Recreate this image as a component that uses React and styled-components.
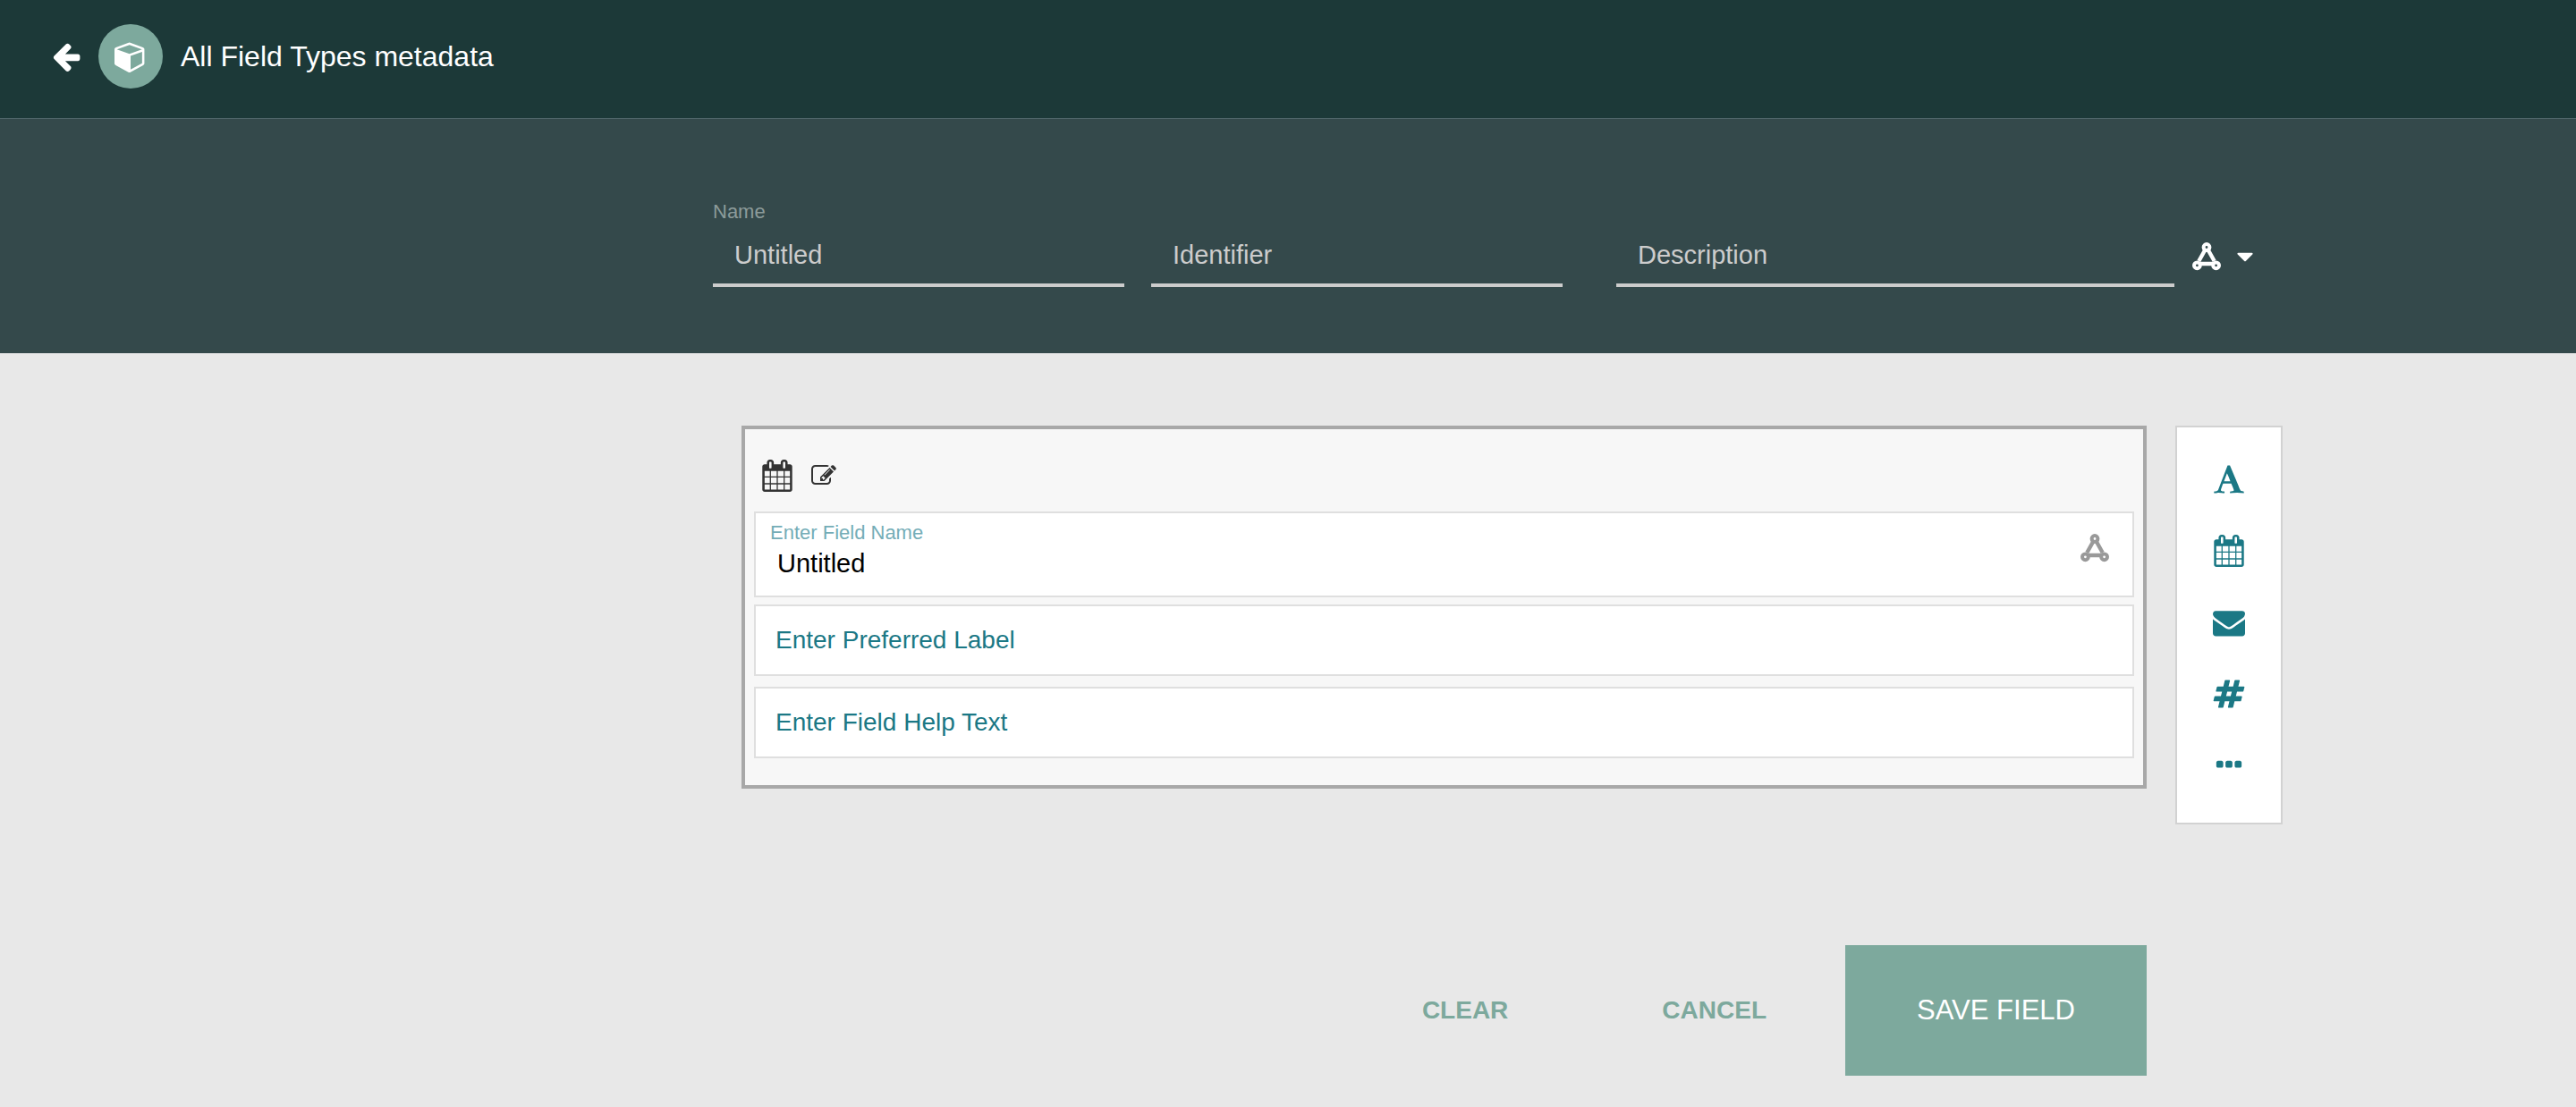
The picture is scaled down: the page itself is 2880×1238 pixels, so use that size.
import React from "react";
import styled, { createGlobalStyle } from "styled-components";

const GlobalStyle = createGlobalStyle`
  *, *::before, *::after { box-sizing: border-box; }
  body {
    margin: 0;
    background: #e8e8e8;
    font-family: "Liberation Sans", Arial, Helvetica, sans-serif;
    font-size: 28px;
    line-height: 32px;
  }
  button, input { font: inherit; }
  button { padding: 0; border: 0; background: none; cursor: pointer; }
`;

/* ---------- icons ---------- */

const Glyph = styled.svg`
  display: block;
  flex: none;
  width: ${(p) => p.$size}px;
  height: ${(p) => p.$size}px;
  fill: currentColor;
`;

const paths = {
  back: "M1664 896v128q0 53-32.5 90.5t-84.5 37.5h-704l293 294q38 36 38 90t-38 90l-75 76q-37 37-90 37-52 0-91-37l-651-652q-37-37-37-90 0-52 37-91l651-650q38-38 91-38 52 0 90 38l75 74q38 38 38 91t-38 91l-293 293h704q52 0 84.5 37.5t32.5 90.5z",
  cube: "M896 1629l640-349v-636l-640 233v752zm-64-865l698-254-698-254-698 254zm832-252v768q0 35-18 65t-49 47l-704 384q-28 16-61 16t-61-16l-704-384q-31-17-49-47t-18-65v-768q0-40 23-73t61-47l704-256q22-8 44-8t44 8l704 256q38 14 61 47t23 73z",
  caret: "M1408 704q0 26-19 45l-448 448q-19 19-45 19t-45-19l-448-448q-19-19-19-45t19-45 45-19h896q26 0 45 19t19 45z",
  calendar: "M192 1664h288v-288h-288v288zm352 0h320v-288h-320v288zm-352-352h288v-320h-288v320zm352 0h320v-320h-320v320zm-352-384h288v-288h-288v288zm736 736h320v-288h-320v288zm-384-736h320v-288h-320v288zm768 736h288v-288h-288v288zm-384-352h320v-320h-320v320zm-352-864v-288q0-13-9.500-22.500t-22.500-9.500h-64q-13 0-22.500 9.500t-9.500 22.500v288q0 13 9.500 22.500t22.500 9.500h64q13 0 22.500-9.500t9.500-22.500zm736 864h288v-320h-288v320zm-384-384h320v-288h-320v288zm384 0h288v-288h-288v288zm32-480v-288q0-13-9.500-22.500t-22.500-9.500h-64q-13 0-22.500 9.500t-9.500 22.500v288q0 13 9.500 22.500t22.500 9.500h64q13 0 22.500-9.500t9.500-22.500zm384-64v1280q0 52-38 90t-90 38h-1408q-52 0-90-38t-38-90v-1280q0-52 38-90t90-38h128v-96q0-66 47-113t113-47h64q66 0 113 47t47 113v96h384v-96q0-66 47-113t113-47h64q66 0 113 47t47 113v96h128q52 0 90 38t38 90z",
  edit: "M888 1184l116-116-152-152-116 116v56h96v96h56zm440-720q-16-16-33 1l-350 350q-17 17-1 33t33-1l350-350q17-17 1-33zm80 594v190q0 119-84.500 203.500t-203.500 84.500h-832q-119 0-203.500-84.500t-84.500-203.500v-832q0-119 84.500-203.500t203.500-84.500h832q63 0 117 25 15 7 18 23 3 17-9 29l-49 49q-14 14-32 8-23-6-45-6h-832q-66 0-113 47t-47 113v832q0 66 47 113t113 47h832q66 0 113-47t47-113v-126q0-13 9-22l64-64q15-15 35-7t20 29zm-96-738l288 288-672 672h-288v-288zm444 132l-92 92-288-288 92-92q28-28 68-28t68 28l152 152q28 28 28 68t-28 68z",
  text: "M789 559l-170 450q33 0 136.500 2t160.500 2q19 0 57-2-87-253-184-452zm-725 1105l2-79q23-7 56-12.500t57-10.500 49.500-14.500 44.500-29 31-50.500l237-616 280-724h128q8 14 11 21l205 480q33 78 106 257.500t114 274.500q15 34 58 144.500t72 168.500q20 45 35 57 19 15 88 29.500t84 20.500q6 38 6 57 0 5-.5 13.500t-.5 12.500q-63 0-190-8t-191-8q-76 0-215 7t-178 8q0-43 4-78l131-28q1 0 12.500-2.500t15.500-3.500 14.500-4.500 15-6.500 11-8 9-11 2.500-14q0-16-31-96.500t-72-177.500-42-100l-450-2q-26 58-76.500 195.500t-50.500 162.500q0 22 14 37.500t43.500 24.500 48.500 13.500 57 8.500 41 4q1 19 1 58 0 9-2 27-58 0-174.500-10t-174.500-10q-8 0-26.500 4t-21.500 4q-80 14-188 14z",
  email: "M1792 710v794q0 66-47 113t-113 47h-1472q-66 0-113-47t-47-113v-794q44 49 101 87 362 246 497 345 57 42 92.500 65.500t94.500 48 110 24.500h2q51 0 110-24.500t94.500-48 92.500-65.500q170-123 498-345 57-39 100-87zm0-294q0 79-49 151t-122 123q-376 261-468 325-10 7-42.500 31t-54 38.500-52 32.500-57.500 27-50 9h-2q-23 0-50-9t-57.500-27-52-32.500-54-38.500-42.500-31q-91-64-262-182.500t-205-142.500q-62-42-117-115.500t-55-136.500q0-78 41.500-130t118.500-52h1472q65 0 112.500 47t47.500 113z",
  number: "M991 1024l64-256h-254l-64 256h254zm768-504l-56 224q-7 24-31 24h-327l-64 256h311q15 0 25 12 10 14 6 28l-56 224q-5 24-31 24h-327l-81 328q-7 24-31 24h-224q-16 0-26-12-9-12-6-28l78-312h-254l-81 328q-7 24-31 24h-225q-15 0-25-12-9-12-6-28l78-312h-311q-15 0-25-12-9-12-6-28l56-224q7-24 31-24h327l64-256h-311q-15 0-25-12-10-14-6-28l56-224q5-24 31-24h327l81-328q7-24 32-24h224q15 0 25 12 9 12 6 28l-78 312h254l81-328q7-24 32-24h224q15 0 25 12 9 12 6 28l-78 312h311q15 0 25 12 9 12 6 28z",
  more: "M576 736v192q0 40-28 68t-68 28h-192q-40 0-68-28t-28-68v-192q0-40 28-68t68-28h192q40 0 68 28t28 68zm512 0v192q0 40-28 68t-68 28h-192q-40 0-68-28t-28-68v-192q0-40 28-68t68-28h192q40 0 68 28t28 68zm512 0v192q0 40-28 68t-68 28h-192q-40 0-68-28t-28-68v-192q0-40 28-68t68-28h192q40 0 68 28t28 68z",
};

const Icon = ({ name, size = 36 }) => (
  <Glyph viewBox="0 0 1792 1792" $size={size} aria-hidden="true">
    <path d={paths[name]} />
  </Glyph>
);

const OntologyIcon = () => (
  <Glyph viewBox="0 0 32 32" $size={32} aria-hidden="true">
    <g fill="none" stroke="currentColor">
      <path strokeWidth="4.400" d="M14.300 8.500L7.300 21M17.700 8.500L24.700 21M9 24H23" />
      <circle strokeWidth="4" cx="16" cy="5.500" r="3.400" />
      <circle strokeWidth="4" cx="5.400" cy="25.800" r="3.400" />
      <circle strokeWidth="4" cx="26.600" cy="25.800" r="3.400" />
    </g>
  </Glyph>
);

/* ---------- top bar ---------- */

const TopBar = styled.header`
  display: flex;
  align-items: center;
  height: 133px;
  padding: 0 56px 6px;
  border-bottom: 1px solid #50666a;
  background: #1c3938;
  color: #fff;
`;

const BackButton = styled.button`
  margin-right: 18px;
  color: inherit;
`;

const Badge = styled.span`
  display: grid;
  place-items: center;
  width: 72px;
  height: 72px;
  margin-right: 20px;
  border-radius: 50%;
  background: #7da99d;
`;

const Title = styled.h1`
  margin: 0;
  font-size: 32px;
  font-weight: 400;
  line-height: 36px;
`;

/* ---------- shared page columns ---------- */

const Columns = styled.div`
  display: grid;
  grid-template-columns: minmax(0, 797fr) minmax(0, 1755fr) minmax(0, 328fr);
  & > * { grid-column: 2; }
`;

/* ---------- details form ---------- */

const DetailsBand = styled(Columns)`
  padding: 88px 0 74px;
  background: #34494b;
`;

const DetailsRow = styled.div`
  display: flex;
  align-items: flex-end;
`;

const Detail = styled.div`
  display: flex;
  flex: ${(p) => p.$grow} 1 0;
  flex-direction: column;
  min-width: 0;
  margin-right: ${(p) => p.$gap}px;
`;

const DetailLabel = styled.label`
  height: 32px;
  color: #8c9b9a;
  font-size: 22px;
`;

const DetailInput = styled.input`
  width: 100%;
  height: 68px;
  padding: 0 24px;
  border: 0;
  border-bottom: 4px solid #ccc;
  border-radius: 0;
  background: none;
  color: #ccc;
  font-size: 29px;
  &::placeholder { color: #ccc; opacity: 1; }
`;

const DetailActions = styled.div`
  display: flex;
  flex: none;
  gap: 12px;
  width: 121px;
  padding: 0 0 18px 20px;
`;

const WhiteButton = styled.button`
  color: #fff;
`;

/* ---------- field editor ---------- */

const Workspace = styled.main`
  display: flex;
  align-items: flex-start;
  gap: 32px;
  padding: 81px 0 0 32px;
`;

const Card = styled.section`
  flex: 1;
  min-width: 0;
  padding: 32px 10px 30px;
  border: 4px solid #a8a8a8;
  background: #f7f7f7;
`;

const CardHead = styled.div`
  display: flex;
  align-items: center;
  gap: 20px;
  height: 60px;
  padding: 0 8px 20px;
  color: #333;
`;

const Field = styled.div`
  display: flex;
  align-items: center;
  height: ${(p) => (p.$tall ? 96 : 80)}px;
  margin-bottom: ${(p) => (p.$last ? 0 : p.$tall ? 8 : 12)}px;
  padding-right: 26px;
  border: 2px solid #dfdfdf;
  background: #fff;
`;

const FieldBody = styled.div`
  display: flex;
  flex: 1;
  flex-direction: column;
  align-self: flex-start;
  min-width: 0;
  padding-top: 8px;
`;

const FieldLabel = styled.label`
  padding-left: 16px;
  color: #74adb7;
  font-size: 22px;
  line-height: 28px;
`;

const FieldInput = styled.input`
  width: 100%;
  height: 40px;
  padding: 0 22px;
  border: 0;
  background: none;
  color: #1b7885;
  &::placeholder { color: inherit; opacity: 1; }
`;

const NameInput = styled(FieldInput)`
  padding: 0 24px;
  color: #000;
  font-size: 29px;
`;

const GreyButton = styled.button`
  padding-bottom: 14px;
  color: #999;
`;

/* ---------- palette ---------- */

const Palette = styled.nav`
  display: flex;
  flex: none;
  flex-direction: column;
  align-items: center;
  width: 120px;
  padding: 18px 0 24px;
  border: 2px solid #d2d2d2;
  background: #fff;
`;

const PaletteButton = styled.button`
  display: grid;
  place-items: center;
  width: 80px;
  height: 80px;
  color: #1b7885;
`;

/* ---------- footer ---------- */

const Actions = styled.footer`
  display: flex;
  justify-content: flex-end;
  align-items: stretch;
  gap: 4px;
  height: 146px;
  margin: 135px 152px 34px 0;
`;

const TextButton = styled.button`
  padding: 0 84px;
  color: #7da99d;
  font-weight: 700;
`;

const SaveButton = styled.button`
  width: 337px;
  background: #7da99d;
  color: #fff;
  font-size: 31px;
`;

const palette = [
  ["text", "Add text field"],
  ["calendar", "Add date field"],
  ["email", "Add email field"],
  ["number", "Add number field"],
  ["more", "More field types"],
];

export default function App() {
  return (
    <>
      <GlobalStyle />
      <TopBar>
        <BackButton type="button" aria-label="Back"><Icon name="back" /></BackButton>
        <Badge><Icon name="cube" /></Badge>
        <Title>All Field Types metadata</Title>
      </TopBar>

      <DetailsBand>
        <DetailsRow>
          <Detail $grow={460} $gap={30}>
            <DetailLabel htmlFor="name">Name</DetailLabel>
            <DetailInput id="name" defaultValue="Untitled" />
          </Detail>
          <Detail $grow={460} $gap={60}>
            <DetailInput aria-label="Identifier" placeholder="Identifier" />
          </Detail>
          <Detail $grow={624} $gap={0}>
            <DetailInput aria-label="Description" placeholder="Description" />
          </Detail>
          <DetailActions>
            <WhiteButton type="button" aria-label="Controlled terms"><OntologyIcon /></WhiteButton>
            <WhiteButton type="button" aria-label="More options"><Icon name="caret" size={30} /></WhiteButton>
          </DetailActions>
        </DetailsRow>
      </DetailsBand>

      <Columns>
        <Workspace>
          <Card>
            <CardHead>
              <Icon name="calendar" />
              <Icon name="edit" size={28} />
            </CardHead>
            <Field $tall>
              <FieldBody>
                <FieldLabel htmlFor="field-name">Enter Field Name</FieldLabel>
                <NameInput id="field-name" defaultValue="Untitled" />
              </FieldBody>
              <GreyButton type="button" aria-label="Controlled terms"><OntologyIcon /></GreyButton>
            </Field>
            <Field>
              <FieldInput aria-label="Enter Preferred Label" placeholder="Enter Preferred Label" />
            </Field>
            <Field $last>
              <FieldInput aria-label="Enter Field Help Text" placeholder="Enter Field Help Text" />
            </Field>
          </Card>
          <Palette aria-label="Field types">
            {palette.map(([name, label]) => (
              <PaletteButton key={name} type="button" aria-label={label}>
                <Icon name={name} />
              </PaletteButton>
            ))}
          </Palette>
        </Workspace>
        <Actions>
          <TextButton type="button">CLEAR</TextButton>
          <TextButton type="button">CANCEL</TextButton>
          <SaveButton type="button">SAVE FIELD</SaveButton>
        </Actions>
      </Columns>
    </>
  );
}
